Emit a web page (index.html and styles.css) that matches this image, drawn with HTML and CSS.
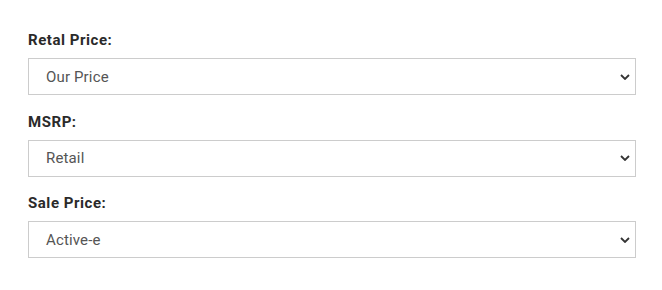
FILE: index.html
```html
<!DOCTYPE html>
<html>
<head>
<meta charset="utf-8">
<link rel="stylesheet" href="styles.css">
</head>
<body>
<div class="form">
  <div class="group">
    <label class="label">Retal Price:</label>
    <div class="select"><span>Our Price</span><svg class="chev" viewBox="0 0 10 6" width="10" height="6"><path d="M1 1 L5 5 L9 1" fill="none" stroke="#333" stroke-width="1.8"/></svg></div>
  </div>
  <div class="group">
    <label class="label">MSRP:</label>
    <div class="select"><span>Retail</span><svg class="chev" viewBox="0 0 10 6" width="10" height="6"><path d="M1 1 L5 5 L9 1" fill="none" stroke="#333" stroke-width="1.8"/></svg></div>
  </div>
  <div class="group">
    <label class="label">Sale Price:</label>
    <div class="select"><span>Active-e</span><svg class="chev" viewBox="0 0 10 6" width="10" height="6"><path d="M1 1 L5 5 L9 1" fill="none" stroke="#333" stroke-width="1.8"/></svg></div>
  </div>
</div>
</body>
</html>
```

FILE: styles.css
```css
html, body { margin: 0; padding: 0; background: #fff; }
body { font-family: Roboto, "Liberation Sans", sans-serif; }
.form { padding: 30px 26px 0 28px; display: flex; flex-direction: column; gap: 16.5px; width: 608px; }
.group { display: flex; flex-direction: column; }
.label { font-size: 15px; font-weight: 700; color: #2a2a2a; line-height: 20px; margin-bottom: 8px; letter-spacing: 0.55px; }
.select { box-sizing: border-box; height: 37px; border: 1px solid #ccc; display: flex; align-items: center; justify-content: space-between; padding: 0 5px 0 17px; font-size: 15px; color: #555; letter-spacing: 0.15px; }
.chev { margin-right: 0; }
```
